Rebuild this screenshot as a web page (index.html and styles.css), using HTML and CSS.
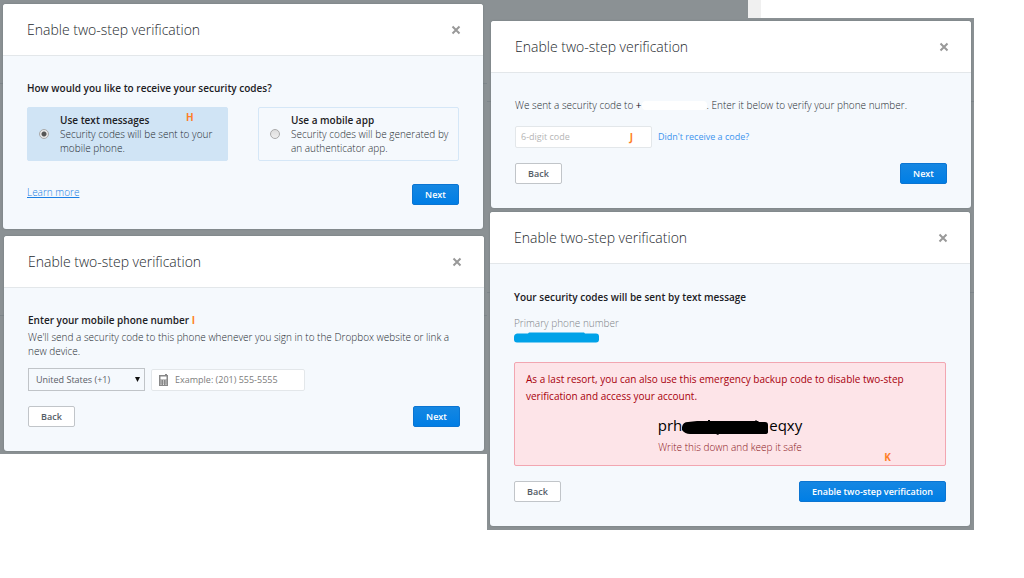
FILE: index.html
```html
<!DOCTYPE html>
<html lang="en">
<head>
<meta charset="utf-8">
<title>Enable two-step verification</title>
<link rel="stylesheet" href="styles.css">
</head>
<body>
<main class="board">
  <div class="column column-left">
    <section class="dialog">
      <header class="dialog-head">
        <h2>Enable two-step verification</h2>
        <button class="close" type="button" aria-label="Close"><svg viewBox="0 0 10 10"><path d="M1.5 1.5l7 7M8.5 1.5l-7 7"/></svg></button>
      </header>
      <form class="dialog-body">
        <h3>How would you like to receive your security codes?</h3>
        <div class="options">
          <label class="option option-selected">
            <input type="radio" name="method" checked>
            <span><strong>Use text messages</strong><br>Security codes will be sent to your mobile phone.</span>
            <b class="mark mark-h">H</b>
          </label>
          <label class="option">
            <input type="radio" name="method">
            <span><strong>Use a mobile app</strong><br>Security codes will be generated by an authenticator app.</span>
          </label>
        </div>
        <div class="actions actions-learn">
          <a class="learn" href="#">Learn more</a>
          <button class="btn btn-primary" type="button">Next</button>
        </div>
      </form>
    </section>

    <section class="dialog dialog-phone">
      <header class="dialog-head">
        <h2>Enable two-step verification</h2>
        <button class="close" type="button" aria-label="Close"><svg viewBox="0 0 10 10"><path d="M1.5 1.5l7 7M8.5 1.5l-7 7"/></svg></button>
      </header>
      <form class="dialog-body">
        <h3>Enter your mobile phone number <b class="mark-i">I</b></h3>
        <p class="intro">We'll send a security code to this phone whenever you sign in to the Dropbox website or link a new device.</p>
        <div class="fields">
          <div class="country">
            <select aria-label="Country"><option>United States (+1)</option></select>
            <svg viewBox="0 0 6 6"><path d="M0 0h6L3 6z"/></svg>
          </div>
          <div class="phone">
            <svg viewBox="0 0 9 12"><path fill-rule="evenodd" d="M0 1h6V0h2v1h1v11H0zM1.500 2.500v3h6v-3zM1.500 6.500v1h1v-1zM4 6.500v1h1v-1zM6.500 6.500v1h1v-1zM1.500 8.500v1h1v-1zM4 8.500v1h1v-1zM6.500 8.500v1h1v-1zM1.500 10.300v.8h1v-.8zM4 10.300v.8h1v-.8zM6.500 10.300v.8h1v-.8z"/></svg>
            <input type="tel" aria-label="Phone number" placeholder="Example: (201) 555-5555">
          </div>
        </div>
        <div class="actions">
          <button class="btn" type="button">Back</button>
          <button class="btn btn-primary" type="button">Next</button>
        </div>
      </form>
    </section>
  </div>

  <div class="column-right">
    <div class="strip"><span class="strip-page"></span><span class="strip-scroll"></span></div>
    <div class="column column-stack">
      <section class="dialog">
        <header class="dialog-head">
          <h2>Enable two-step verification</h2>
          <button class="close" type="button" aria-label="Close"><svg viewBox="0 0 10 10"><path d="M1.5 1.5l7 7M8.5 1.5l-7 7"/></svg></button>
        </header>
        <form class="dialog-body">
          <p>We sent a security code to <b class="plus">+</b><span class="blank"></span>. Enter it below to verify your phone number.</p>
          <div class="fields fields-code">
            <div class="code">
              <input type="text" aria-label="Security code" placeholder="6-digit code">
              <b class="mark mark-j">J</b>
            </div>
            <a class="resend" href="#">Didn't receive a code?</a>
          </div>
          <div class="actions">
            <button class="btn" type="button">Back</button>
            <button class="btn btn-primary" type="button">Next</button>
          </div>
        </form>
      </section>

      <section class="dialog dialog-backup">
        <header class="dialog-head">
          <h2>Enable two-step verification</h2>
          <button class="close" type="button" aria-label="Close"><svg viewBox="0 0 10 10"><path d="M1.5 1.5l7 7M8.5 1.5l-7 7"/></svg></button>
        </header>
        <form class="dialog-body body-backup">
          <h3>Your security codes will be sent by text message</h3>
          <p class="muted">Primary phone number</p>
          <svg class="scribble-blue" viewBox="0 0 85 11"><path d="M3 1.500h11l1-1h55l1 1h11q3 0 3 3v3q0 3-3 3H3q-3 0-3-3V5q0-3 3-3.500z"/></svg>
          <div class="alert">
            <p class="alert-text">As a last resort, you can also use this emergency backup code to disable two-step verification and access your account.</p>
            <p class="backup">prh<svg viewBox="0 0 87 16"><path d="M0 8q1-5 6-5l9-1h11V1h2v1h45l1-1 1 1h1l1 1h6q3 0 3 3v7q0 2-3 2H37l-1 1-2-1H8q-5 0-8-4z"/></svg>eqxy</p>
            <p class="keep">Write this down and keep it safe</p>
            <b class="mark mark-k">K</b>
          </div>
          <div class="actions">
            <button class="btn" type="button">Back</button>
            <button class="btn btn-primary" type="button">Enable two-step verification</button>
          </div>
        </form>
      </section>
    </div>
  </div>
</main>
</body>
</html>
```
FILE: styles.css
```css
* { box-sizing: border-box; }
body {
  margin: 0;
  background: #fff;
  color: #262b31;
  font: 300 10px/14px "Open Sans", sans-serif;
}
h2, h3, p { margin: 0; }
button, input, select { font: inherit; }
a { color: #1b7fe4; text-decoration: none; }
strong, h3 { color: #1c2024; font-weight: 600; }

.board {
  display: grid;
  grid-template-columns: 487fr 487fr 50fr;
  align-items: start;
}
.column {
  display: flex;
  flex-direction: column;
  background: #8b9194;
}
.column-left {
  gap: 7px;
  padding: 4px 4px 3px 3px;
  background:
    linear-gradient(#7d858a, #7d858a) 0 83px / 100% 1px no-repeat,
    linear-gradient(#7d858a, #7d858a) 0 315px / 100% 1px no-repeat,
    #8b9194;
}
.column-stack {
  gap: 4px;
  padding: 3px 3px 4px 4px;
  background:
    linear-gradient(#7d858a, #7d858a) 0 83px / 100% 1px no-repeat,
    linear-gradient(#7d858a, #7d858a) 0 274px / 100% 1px no-repeat,
    #8b9194;
}
.column-right { min-width: 0; }
.strip { display: flex; height: 18px; }
.strip-page { flex: 0 0 calc(100% * 261 / 487); background: #8b9194; }
.strip-scroll { width: 13px; background: #f0f0f0; }

.dialog {
  overflow: hidden;
  border-radius: 3px;
  background: #f5f9fd;
  box-shadow: 0 0 2px #6f7679;
}
.dialog-phone { position: relative; left: 1px; }
.dialog-backup { position: relative; left: -1px; }
.dialog-head {
  display: flex;
  align-items: center;
  justify-content: space-between;
  height: 52px;
  padding: 0 21px 0 24px;
  border-bottom: 1px solid #e3e7ea;
  background: #fff;
}
h2 { color: #25292e; font-size: 14px; line-height: 20px; font-weight: 300; }
.close {
  width: 12px;
  height: 12px;
  padding: 1px;
  border: 0;
  background: none;
}
.close svg { display: block; width: 10px; height: 10px; fill: none; stroke: #999; stroke-width: 2; }
.dialog-body { padding: 25px 24px 24px; }
.body-backup { padding-top: 26px; }
h3 { font-size: 10px; line-height: 14px; }

.options { display: flex; gap: 30px; margin-top: 12px; }
.option {
  position: relative;
  display: flex;
  flex: 1;
  align-items: center;
  gap: 11px;
  padding: 5px 2px 5px 11px;
  border: 1px solid #d5e7f7;
  border-radius: 2px;
}
.option-selected { border-color: #d0e4f5; background: #d0e4f5; }
.option input {
  flex: none;
  width: 10px;
  height: 10px;
  margin: 0;
  appearance: none;
  border: 1px solid #aaa;
  border-radius: 50%;
  background: linear-gradient(#ddd, #eee);
}
.option input:checked { background: radial-gradient(circle, #555 0 2px, #e8e8e8 3px); }

.mark { position: absolute; }
.mark, .mark-i { color: #ff7f27; font-weight: 700; }
.mark-h { top: 2px; left: 158px; }
.mark-j { top: 3px; right: 18px; }
.mark-k { right: 54px; bottom: 1px; }

.actions {
  display: flex;
  align-items: center;
  justify-content: space-between;
  margin-top: 15px;
}
.actions-learn { align-items: flex-start; margin-top: 23px; }
.learn { margin-top: 1px; text-decoration: underline; }
.btn {
  min-width: 47px;
  height: 21px;
  padding: 0 12px;
  border: 1px solid #c1c5c9;
  border-radius: 2px;
  background: #fff;
  color: #535c66;
  font-size: 9px;
  line-height: 14px;
  font-weight: 600;
}
.btn-primary {
  border-color: #0b75d2;
  background: linear-gradient(#1587e2, #007ee5);
  color: #fff;
}

.intro { margin-top: 3px; }
.fields { display: flex; align-items: center; gap: 6px; margin-top: 10px; }
.fields-code { margin-top: 14px; }
.country { position: relative; width: 117px; }
.country select {
  display: block;
  width: 100%;
  height: 23px;
  padding: 0 7px;
  appearance: none;
  border: 1px solid #c0c4c8;
  border-radius: 0;
  background: #f5f9fd;
  color: #5a6067;
  font-size: 9px;
  font-weight: 400;
}
.country svg { position: absolute; top: 9px; right: 5px; width: 5px; height: 5px; fill: #111; }
.phone, .code {
  position: relative;
  display: flex;
  align-items: center;
  height: 22px;
  border: 1px solid #e3e7ea;
  border-radius: 2px;
  background: #fff;
}
.phone { gap: 7px; width: 154px; padding-left: 7px; }
.phone svg { flex: none; width: 9px; height: 12px; fill: #888; }
.code { width: 137px; padding-left: 5px; }
.phone input, .code input {
  width: 100%;
  min-width: 0;
  padding: 0;
  border: 0;
  background: none;
  font-size: 9px;
  font-weight: 400;
}
.phone input::placeholder { color: #7c7c7c; }
.code input::placeholder { color: #b5b5b5; }
.resend { color: #3d94ee; font-size: 9px; font-weight: 400; }

.plus { color: #111; }
.blank {
  display: inline-block;
  width: 65px;
  height: 9px;
  border-radius: 4px;
  background: #fff;
  vertical-align: -1px;
}

.muted { margin-top: 12px; color: #7f8488; }
.scribble-blue { display: block; width: 85px; height: 11px; margin-top: 2px; fill: #00a2e8; }
.alert {
  position: relative;
  margin-top: 19px;
  padding: 8px 11px 11px;
  border: 1px solid #f2a6b1;
  border-radius: 2px;
  background: #fde4e8;
  color: #8a1420;
  text-align: center;
}
.alert-text { color: #a8000c; font-weight: 400; line-height: 17px; text-align: left; }
.backup { margin-top: 10px; color: #000; font-size: 15px; line-height: 20px; font-weight: 400; }
.backup svg { width: 87px; height: 16px; vertical-align: -4px; fill: #000; }
.keep { margin-top: 5px; }
```
